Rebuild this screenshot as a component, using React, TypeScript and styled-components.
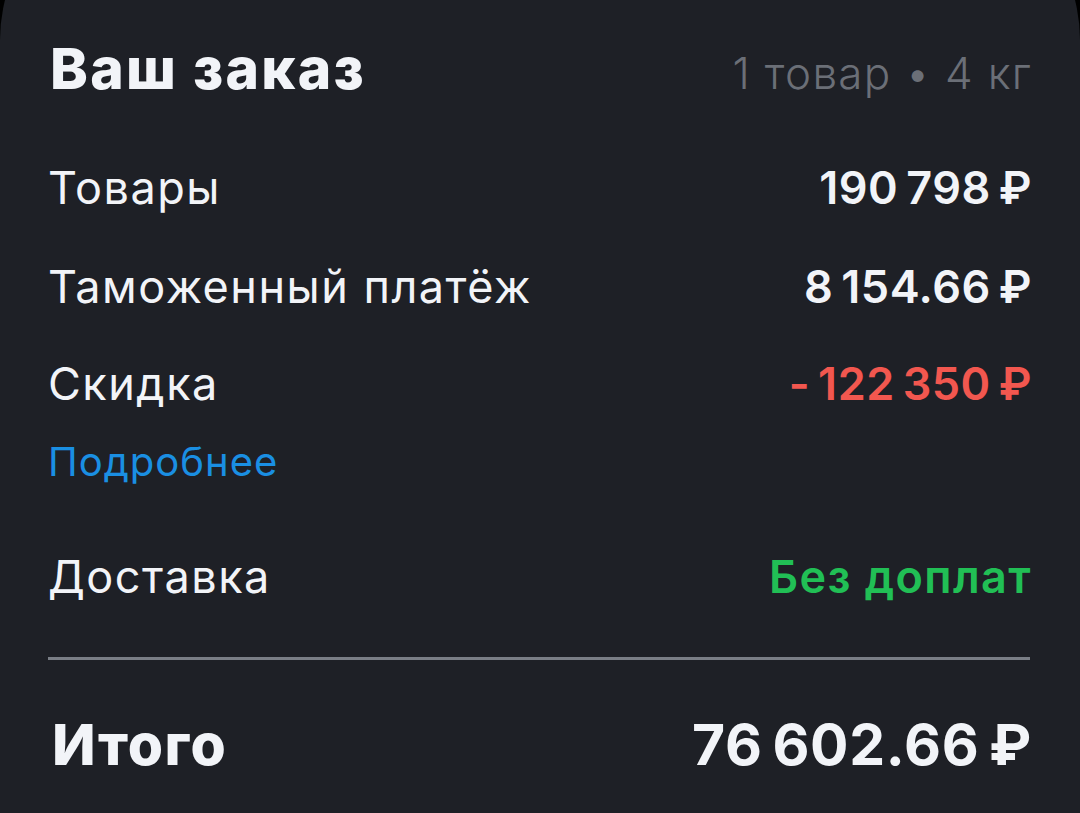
import React from "react";
import styled, { createGlobalStyle } from "styled-components";

const GlobalStyle = createGlobalStyle`
  html, body {
    margin: 0;
    padding: 0;
    background: #000;
    overflow: hidden;
  }
  body {
    font-family: "Inter", "Roboto", sans-serif;
    -webkit-font-smoothing: antialiased;
  }
`;

const Card = styled("div")`
  margin-top: -122px;
  padding: 156px 48px 0 48px;
  height: calc(100vh + 122px);
  box-sizing: border-box;
  background: #1e2026;
  border-radius: 162px 162px 0 0;
  color: #f2f4f8;
`;

const Header = styled("div")`
  display: flex;
  justify-content: space-between;
  align-items: baseline;
  margin-left: 2px;
`;

const Title = styled("h1")`
  margin: 0;
  font-size: 57px;
  line-height: 70px;
  font-weight: 800;
  letter-spacing: 2.3px;
`;

const Meta = styled("span")`
  font-size: 44px;
  font-weight: 300;
  color: #6b6f77;
  letter-spacing: 1.3px;
`;

const Row = styled("div")<{ $gap: number }>`
  display: flex;
  justify-content: space-between;
  align-items: baseline;
  margin-top: ${(p) => p.$gap}px;
  line-height: 56px;
`;

const Label = styled("span")`
  font-size: 45px;
  font-weight: 400;
  letter-spacing: 1.5px;
`;

const Value = styled("span")<{ $color?: string; $spacing?: number }>`
  font-size: 45px;
  font-weight: 600;
  letter-spacing: ${(p) => p.$spacing ?? 0.5}px;
  color: ${(p) => p.$color || "#f2f4f8"};
`;

const More = styled("a")`
  display: block;
  margin-top: 25px;
  font-size: 40px;
  line-height: 50px;
  color: #1a8fe3;
  text-decoration: none;
  letter-spacing: 1px;
`;

const Divider = styled("hr")`
  margin: 52px 2px 0 0;
  border: none;
  height: 3px;
  background: #7a7e86;
`;

const TotalRow = styled("div")`
  display: flex;
  justify-content: space-between;
  align-items: baseline;
  margin-top: 50px;
  line-height: 70px;
  margin-left: 4px;
`;

const TotalLabel = styled("span")`
  font-size: 57px;
  font-weight: 800;
  letter-spacing: 1.4px;
`;

const TotalValue = styled("span")`
  font-size: 57px;
  font-weight: 700;
  letter-spacing: 0.7px;
`;

const T = "\u2009";

export default function App() {
  return (
    <>
      <GlobalStyle />
      <Card>
        <Header>
          <Title>Ваш заказ</Title>
          <Meta>1 товар • 4 кг</Meta>
        </Header>
        <Row $gap={56}>
          <Label>Товары</Label>
          <Value>{`190${T}798${T}₽`}</Value>
        </Row>
        <Row $gap={43}>
          <Label>Таможенный платёж</Label>
          <Value>{`8${T}154.66${T}₽`}</Value>
        </Row>
        <Row $gap={41}>
          <Label>Скидка</Label>
          <Value $color="#f2574f">{`-${T}122${T}350${T}₽`}</Value>
        </Row>
        <More href="#">Подробнее</More>
        <Row $gap={62}>
          <Label>Доставка</Label>
          <Value $color="#21bf55" $spacing={1.4}>
            Без доплат
          </Value>
        </Row>
        <Divider />
        <TotalRow>
          <TotalLabel>Итого</TotalLabel>
          <TotalValue>{`76${T}602.66${T}₽`}</TotalValue>
        </TotalRow>
      </Card>
    </>
  );
}
